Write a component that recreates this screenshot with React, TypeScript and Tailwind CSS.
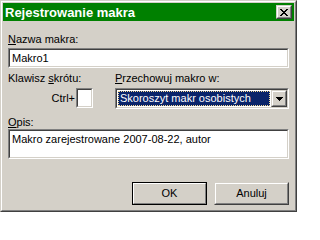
import * as React from 'react';

// classic 3D borders
const sunken = 'border-t border-l border-t-[#808080] border-l-[#808080] border-b border-r border-b-white border-r-white';
const sunkenInner = 'border-t border-l border-t-[#404040] border-l-[#404040] border-b border-r border-b-[#d4d0c8] border-r-[#d4d0c8]';

const CloseGlyph = () => (
    <svg width="8" height="7" viewBox="0 0 8 7" shapeRendering="crispEdges">
        <path d="M0 0h2v1H0zM6 0h2v1H6zM1 1h2v1H1zM5 1h2v1H5zM2 2h4v1H2zM3 3h2v1H3zM2 4h4v1H2zM1 5h2v1H1zM5 5h2v1H5zM0 6h2v1H0zM6 6h2v1H6z" fill="#000" />
    </svg>
);

const ArrowGlyph = () => (
    <svg width="7" height="4" viewBox="0 0 7 4" shapeRendering="crispEdges">
        <path d="M0 0h7v1H0zM1 1h5v1H1zM2 2h3v1H2zM3 3h1v1H3z" fill="#000" />
    </svg>
);

const Raised: React.FC<{ className?: string; children?: React.ReactNode }> = ({ className = '', children }) => (
    <div className={`border-t border-l border-t-[#d4d0c8] border-l-[#d4d0c8] border-b border-r border-b-[#404040] border-r-[#404040] ${className}`}>
        <div className="w-full h-full bg-[#d4d0c8] border-t border-l border-t-white border-l-white border-b border-r border-b-[#808080] border-r-[#808080] flex items-center justify-center">
            {children}
        </div>
    </div>
);

const Field: React.FC<{ className?: string; children?: React.ReactNode }> = ({ className = '', children }) => (
    <div className={`${sunken} ${className}`}>
        <div className={`${sunkenInner} w-full h-full bg-white`}>{children}</div>
    </div>
);

export default function App() {
    return (
        <div className="w-[297px] h-[212px] font-['Liberation_Sans',Arial,sans-serif] text-[11px] text-black">
            {/* Window frame */}
            <div className="w-full h-full border border-t-[#d4d0c8] border-l-[#d4d0c8] border-b-[#404040] border-r-[#404040]">
                <div className="w-full h-full border border-t-white border-l-white border-b-[#808080] border-r-[#808080] bg-[#d4d0c8] p-px flex flex-col">
                    {/* Title bar */}
                    <div className="h-[18px] bg-[#008000] flex items-center justify-between pl-[2px] pr-[2px]">
                        <span className="text-white font-bold text-[13px] leading-none">Rejestrowanie makra</span>
                        <Raised className="w-[16px] h-[14px]">
                            <CloseGlyph />
                        </Raised>
                    </div>

                    {/* Body */}
                    <div className="flex-1 flex flex-col px-[5px]">
                        <div className="mt-[12px] leading-[13px]"><u>N</u>azwa makra:</div>
                        <Field className="mt-[2px] h-[20px]">
                            <div className="pl-[2px] leading-[16px]">Makro1</div>
                        </Field>

                        <div className="flex mt-[4px]">
                            <div className="w-[107px] flex flex-col">
                                <div className="leading-[13px]">Klawisz <u>s</u>krótu:</div>
                                <div className="w-[85px] mt-[3px] flex justify-end items-center">
                                    <span className="mr-px">Ctrl+</span>
                                    <Field className="w-[17px] h-[20px]" />
                                </div>
                            </div>
                            <div className="flex-1 flex flex-col">
                                <div className="leading-[13px]"><u>P</u>rzechowuj makro w:</div>
                                <Field className="mt-[3px] h-[21px]">
                                    <div className="flex h-full items-stretch">
                                        <div className="flex-1 p-px">
                                            <div className="h-full bg-[#0a246a] border border-dotted border-[#f5db95] text-white leading-[13px] pl-px">
                                                Skoroszyt makr osobistych
                                            </div>
                                        </div>
                                        <Raised className="w-[16px] h-full">
                                            <ArrowGlyph />
                                        </Raised>
                                    </div>
                                </Field>
                            </div>
                        </div>

                        <div className="mt-[7px] leading-[13px]"><u>O</u>pis:</div>
                        <Field className="mt-0 h-[30px]">
                            <div className="pl-[2px] pt-[2px] leading-[13px]">Makro zarejestrowane 2007-08-22, autor</div>
                        </Field>

                        <div className="mt-[23px] flex justify-end gap-[7px]">
                            <div className="w-[75px] h-[23px] border border-black">
                                <div className="w-full h-full bg-[#d4d0c8] border-t border-l border-t-white border-l-white border-b border-r border-b-[#808080] border-r-[#808080] flex items-center justify-center">
                                    OK
                                </div>
                            </div>
                            <Raised className="w-[75px] h-[23px]">Anuluj</Raised>
                        </div>
                    </div>
                </div>
            </div>
        </div>
    );
}
